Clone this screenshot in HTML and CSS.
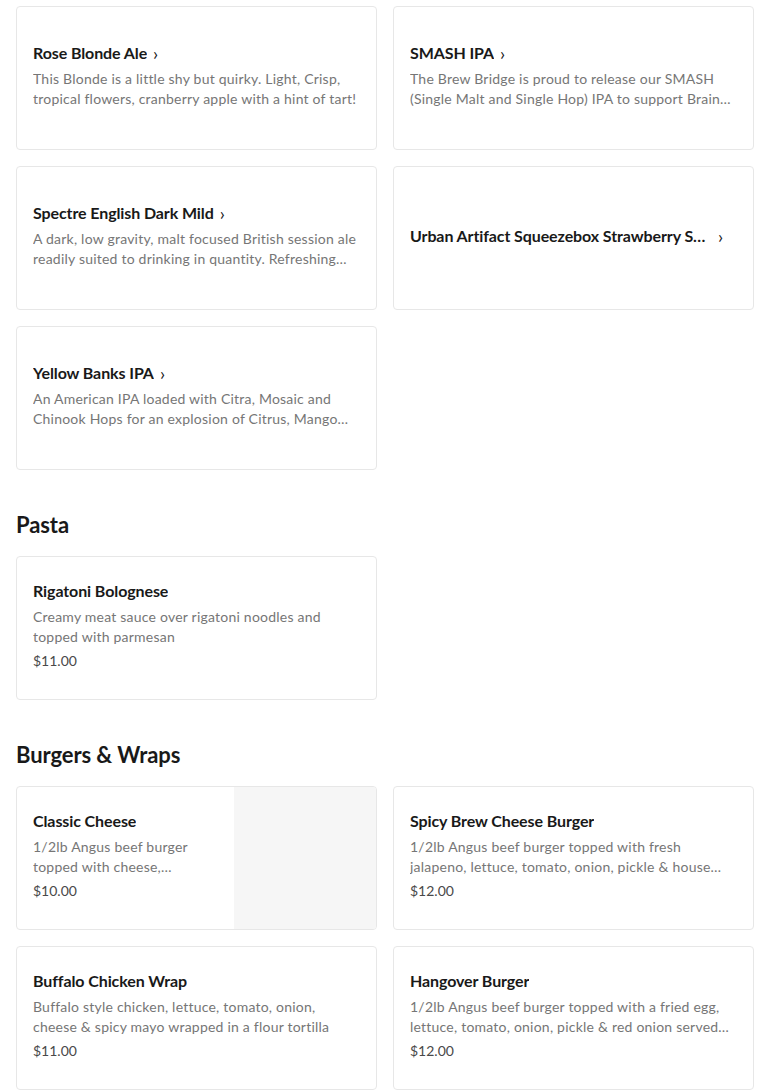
FILE: index.html
```html
<!DOCTYPE html>
<html lang="en">
<head>
  <meta charset="UTF-8" />
  <meta name="viewport" content="width=device-width, initial-scale=1.0" />
  <title>Menu</title>
  <link rel="stylesheet" href="styles.css">
</head>
<body>
  <div class="menu">
    <section class="category">
      <div class="grid">
        <div class="item">
          <div class="item-body">
            <div class="item-title"><span class="name">Rose Blonde Ale</span><span class="chev">&rsaquo;</span></div>
            <div class="item-desc">This Blonde is a little shy but quirky. Light, Crisp, tropical flowers, cranberry apple with a hint of tart!</div>
          </div>
        </div>
        <div class="item">
          <div class="item-body">
            <div class="item-title"><span class="name">SMASH IPA</span><span class="chev">&rsaquo;</span></div>
            <div class="item-desc">The Brew Bridge is proud to release our SMASH (Single Malt and Single Hop) IPA to support Brain Injury Awareness with every pint poured this month.</div>
          </div>
        </div>
        <div class="item">
          <div class="item-body">
            <div class="item-title"><span class="name">Spectre English Dark Mild</span><span class="chev">&rsaquo;</span></div>
            <div class="item-desc">A dark, low gravity, malt focused British session ale readily suited to drinking in quantity. Refreshing and full of roasty character.</div>
          </div>
        </div>
        <div class="item">
          <div class="item-body">
            <div class="item-title"><span class="name">Urban Artifact Squeezebox Strawberry Sour</span><span class="chev">&rsaquo;</span></div>
          </div>
        </div>
        <div class="item">
          <div class="item-body">
            <div class="item-title"><span class="name">Yellow Banks IPA</span><span class="chev">&rsaquo;</span></div>
            <div class="item-desc">An American IPA loaded with Citra, Mosaic and Chinook Hops for an explosion of Citrus, Mango and Tropical fruit flavors.</div>
          </div>
        </div>
      </div>
    </section>

    <section class="category">
      <h2>Pasta</h2>
      <div class="grid">
        <div class="item">
          <div class="item-body">
            <div class="item-title"><span class="name">Rigatoni Bolognese</span></div>
            <div class="item-desc">Creamy meat sauce over rigatoni noodles and topped with parmesan</div>
            <div class="item-price">$11.00</div>
          </div>
        </div>
      </div>
    </section>

    <section class="category">
      <h2>Burgers &amp; Wraps</h2>
      <div class="grid">
        <div class="item">
          <div class="item-body with-photo">
            <div class="item-title"><span class="name">Classic Cheese</span></div>
            <div class="item-desc">1/2lb Angus beef burger topped with cheese, lettuce, tomato, onion &amp; pickle</div>
            <div class="item-price">$10.00</div>
          </div>
          <div class="item-photo"></div>
        </div>
        <div class="item">
          <div class="item-body">
            <div class="item-title"><span class="name">Spicy Brew Cheese Burger</span></div>
            <div class="item-desc">1/2lb Angus beef burger topped with fresh jalapeno, lettuce, tomato, onion, pickle &amp; house made spicy mayo</div>
            <div class="item-price">$12.00</div>
          </div>
        </div>
        <div class="item">
          <div class="item-body">
            <div class="item-title"><span class="name">Buffalo Chicken Wrap</span></div>
            <div class="item-desc">Buffalo style chicken, lettuce, tomato, onion, cheese &amp; spicy mayo wrapped in a flour tortilla</div>
            <div class="item-price">$11.00</div>
          </div>
        </div>
        <div class="item">
          <div class="item-body">
            <div class="item-title"><span class="name">Hangover Burger</span></div>
            <div class="item-desc">1/2lb Angus beef burger topped with a fried egg, lettuce, tomato, onion, pickle &amp; red onion served on a toasted bun</div>
            <div class="item-price">$12.00</div>
          </div>
        </div>
      </div>
    </section>
  </div>
</body>
</html>
```

FILE: styles.css
```css
body {
  margin: 0;
  padding: 0;
  font-family: Lato, 'Liberation Sans', sans-serif;
  background: #fff;
  color: #191919;
}
.menu {
  padding: 6px 16px 0;
}
.category + .category {
  margin-top: 41px;
}
.category h2 {
  margin: 0 0 17px;
  font-size: 22px;
  line-height: 28px;
  font-weight: 700;
  letter-spacing: -0.1px;
}
.grid {
  display: grid;
  grid-template-columns: 1fr 1fr;
  gap: 16px;
}
.item {
  display: flex;
  height: 144px;
  box-sizing: border-box;
  border: 1px solid #e7e7e7;
  border-radius: 4px;
  overflow: hidden;
  background: #fff;
}
.item-body {
  flex: 1;
  min-width: 0;
  display: flex;
  flex-direction: column;
  justify-content: center;
  padding: 0 16px 4px;
}
.item-body.with-photo {
  padding-right: 24px;
}
.item-title {
  display: flex;
  align-items: center;
  font-size: 16px;
  line-height: 20px;
  font-weight: 700;
  letter-spacing: -0.1px;
}
.item-title .name {
  white-space: nowrap;
  overflow: hidden;
  text-overflow: ellipsis;
}
.chev {
  flex: none;
  margin-left: 6px;
  padding-right: 14px;
  font-size: 18px;
  line-height: 20px;
  font-weight: 400;
}
.item-desc {
  margin-top: 6px;
  font-size: 14px;
  line-height: 20px;
  letter-spacing: 0.22px;
  color: #767676;
  display: -webkit-box;
  -webkit-line-clamp: 2;
  -webkit-box-orient: vertical;
  overflow: hidden;
}
.item-price {
  margin-top: 4px;
  font-size: 14px;
  line-height: 20px;
  color: #494949;
}
.item-photo {
  flex: none;
  width: 142px;
  background: #f6f6f6;
}
```
